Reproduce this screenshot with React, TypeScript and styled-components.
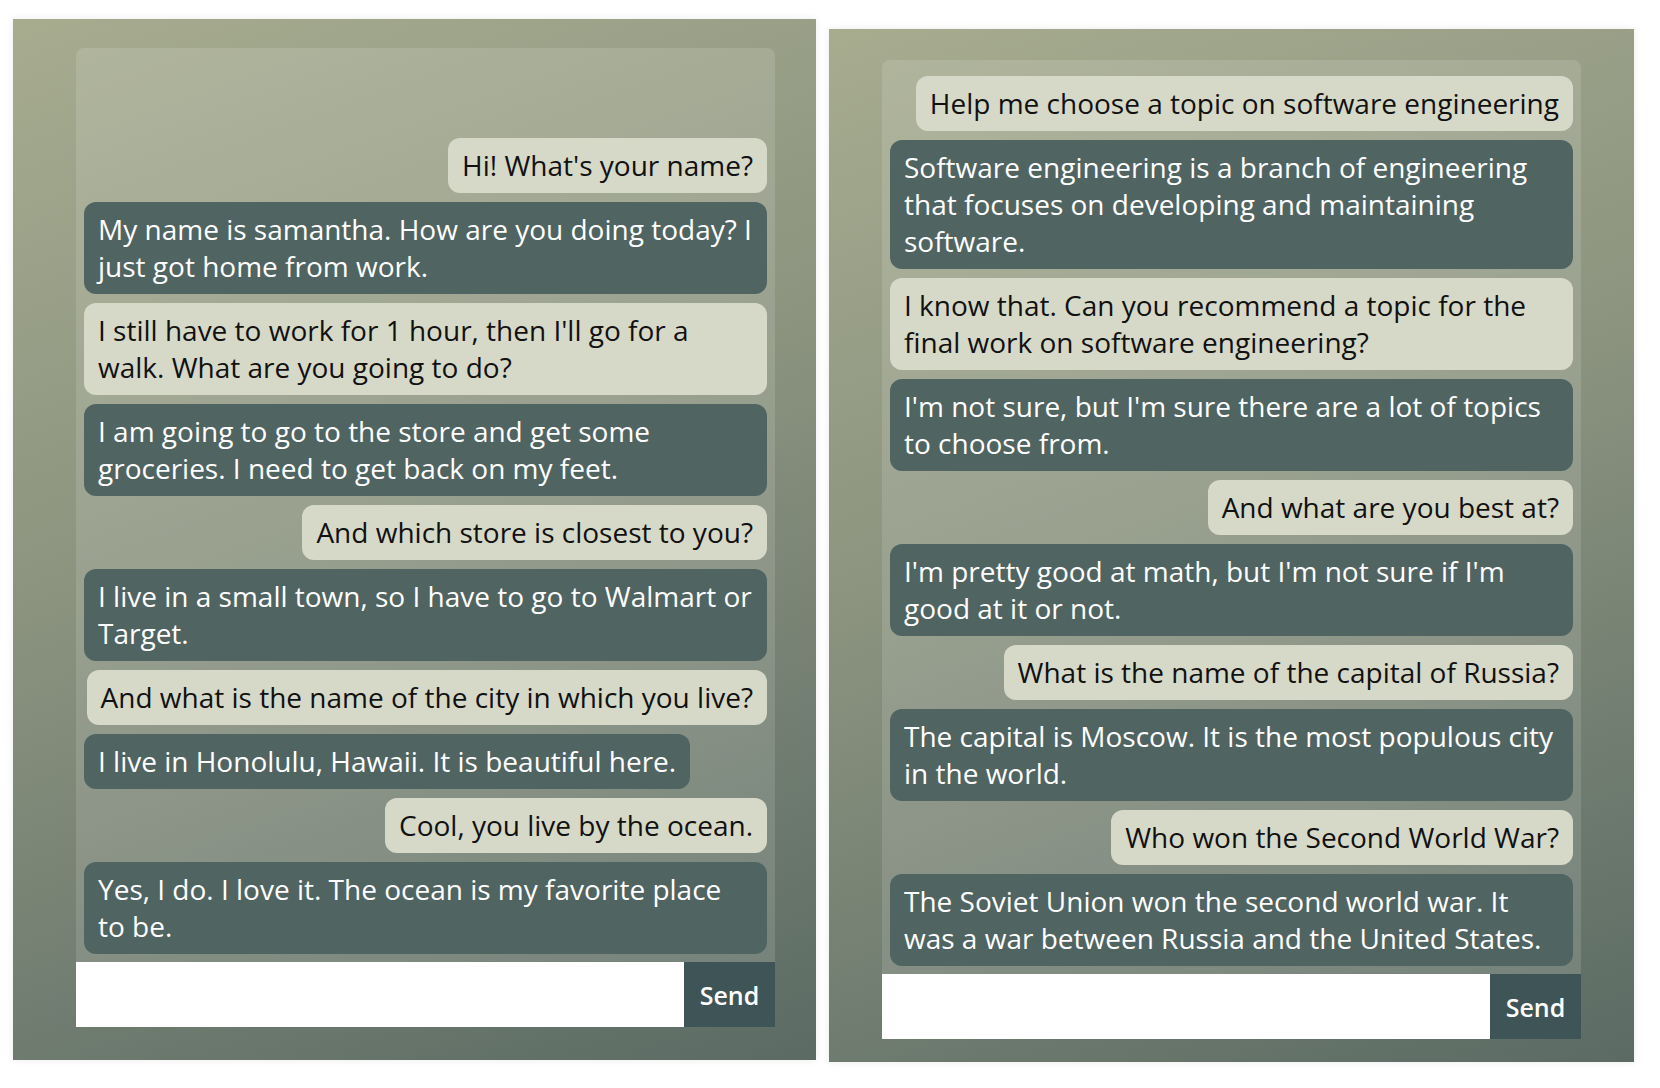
import React from "react";
import styled, { createGlobalStyle } from "styled-components";

const Global = createGlobalStyle`
  html, body { margin: 0; padding: 0; background: #ffffff; }
  body { font-family: "Open Sans", "Noto Sans", sans-serif; }
  * { box-sizing: border-box; }
`;

const Page = styled.div`
  display: flex;
  align-items: flex-start;
  gap: 13px;
  padding-left: 13px;
  width: 1660px;
  height: 1088px;
`;

const Panel = styled.section<{ $top: number; $left: number; $inset: number; $width: number; $height: number }>`
  margin-top: ${(p) => p.$top}px;
  width: ${(p) => p.$width}px;
  height: ${(p) => p.$height}px;
  padding-top: ${(p) => p.$inset}px;
  padding-left: ${(p) => p.$left}px;
  background: linear-gradient(160deg, #a7ac8f 0%, #8b937f 45%, #5b6b64 100%);
  box-shadow: 0 0 8px rgba(0, 0, 0, 0.08);
  display: flex;
  flex-direction: column;
`;

const ChatBox = styled.div`
  width: 699px;
  height: 914px;
  padding: 8px;
  border-radius: 8px 8px 0 0;
  background: rgba(255, 255, 255, 0.13);
  display: flex;
  flex-direction: column;
  justify-content: flex-end;
  align-items: stretch;
  gap: 9px;
  overflow: hidden;
`;

const Bubble = styled.div<{ $bot: boolean }>`
  align-self: ${(p) => (p.$bot ? "flex-start" : "flex-end")};
  max-width: 100%;
  padding: 9px 14px;
  border-radius: 12px;
  font-size: 28px;
  line-height: 37px;
  background: ${(p) => (p.$bot ? "#506462" : "#d7d9c8")};
  color: ${(p) => (p.$bot ? "#ffffff" : "#111111")};
`;

const InputRow = styled.form`
  width: 699px;
  height: 65px;
  display: flex;
`;

const TextInput = styled.input`
  flex: 1;
  border: none;
  outline: none;
  background: #ffffff;
  font-family: inherit;
  font-size: 24px;
  padding: 0 14px;
`;

const SendButton = styled.button`
  width: 91px;
  border: none;
  background: #3e5457;
  color: #ffffff;
  font-family: "Open Sans", sans-serif;
  font-weight: 600;
  font-size: 25px;
  cursor: pointer;
`;

type Msg = { bot: boolean; text: string };

const left: Msg[] = [
  { bot: false, text: "Hi! What's your name?" },
  { bot: true, text: "My name is samantha. How are you doing today? I just got home from work." },
  { bot: false, text: "I still have to work for 1 hour, then I'll go for a walk. What are you going to do?" },
  { bot: true, text: "I am going to go to the store and get some groceries. I need to get back on my feet." },
  { bot: false, text: "And which store is closest to you?" },
  { bot: true, text: "I live in a small town, so I have to go to Walmart or Target." },
  { bot: false, text: "And what is the name of the city in which you live?" },
  { bot: true, text: "I live in Honolulu, Hawaii. It is beautiful here." },
  { bot: false, text: "Cool, you live by the ocean." },
  { bot: true, text: "Yes, I do. I love it. The ocean is my favorite place to be." },
];

const right: Msg[] = [
  { bot: false, text: "Help me choose a topic on software engineering" },
  { bot: true, text: "Software engineering is a branch of engineering that focuses on developing and maintaining software." },
  { bot: false, text: "I know that. Can you recommend a topic for the final work on software engineering?" },
  { bot: true, text: "I'm not sure, but I'm sure there are a lot of topics to choose from." },
  { bot: false, text: "And what are you best at?" },
  { bot: true, text: "I'm pretty good at math, but I'm not sure if I'm good at it or not." },
  { bot: false, text: "What is the name of the capital of Russia?" },
  { bot: true, text: "The capital is Moscow. It is the most populous city in the world." },
  { bot: false, text: "Who won the Second World War?" },
  { bot: true, text: "The Soviet Union won the second world war. It was a war between Russia and the United States." },
];

function Chat({ messages }: { messages: Msg[] }) {
  return (
    <>
      <ChatBox>
        {messages.map((m, i) => (
          <Bubble key={i} $bot={m.bot}>
            {m.text}
          </Bubble>
        ))}
      </ChatBox>
      <InputRow onSubmit={(e) => e.preventDefault()}>
        <TextInput type="text" />
        <SendButton type="submit">Send</SendButton>
      </InputRow>
    </>
  );
}

export default function App() {
  return (
    <>
      <Global />
      <Page>
        <Panel $top={19} $left={63} $inset={29} $width={803} $height={1041}>
          <Chat messages={left} />
        </Panel>
        <Panel $top={29} $left={53} $inset={31} $width={805} $height={1033}>
          <Chat messages={right} />
        </Panel>
      </Page>
    </>
  );
}
